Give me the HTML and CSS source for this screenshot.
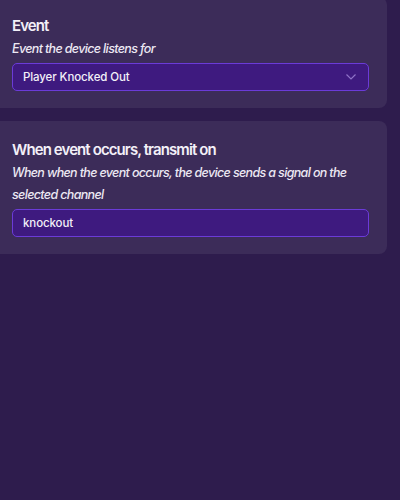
FILE: index.html
```html
<!DOCTYPE html>
<html>
<head>
<meta charset="utf-8">
<link rel="stylesheet" href="styles.css">
</head>
<body>
<div class="stack">
  <section class="card first">
    <h2 class="title">Event</h2>
    <p class="desc">Event the device listens for</p>
    <div class="field select">
      <span>Player Knocked Out</span>
      <svg class="chev" width="10" height="6" viewBox="0 0 10 6"><path d="M0.5 0.5 L5 5 L9.5 0.5" fill="none" stroke="#8f72c8" stroke-width="1.2"/></svg>
    </div>
  </section>
  <section class="card">
    <h2 class="title">When event occurs, transmit on</h2>
    <p class="desc">When when the event occurs, the device sends a signal on the selected channel</p>
    <div class="field">
      <span>knockout</span>
    </div>
  </section>
</div>
</body>
</html>
```
FILE: styles.css
```css
html, body {
  margin: 0;
  padding: 0;
  background: #2e1c4d;
  height: 100%;
}
body {
  font-family: Inter, "Noto Sans", sans-serif;
  color: #f1eef6;
}
.stack {
  display: flex;
  flex-direction: column;
  gap: 13px;
  margin-left: -10px;
  width: 397px;
}
.card {
  background: #3c2c59;
  border-radius: 8px;
  padding: 17px 18px 17px 22px;
}
.card.first {
  margin-top: -3px;
}
.title {
  margin: 0;
  font-size: 15px;
  line-height: 24px;
  font-weight: 600;
  letter-spacing: -0.9px;
  color: #f3f0f8;
}
.desc {
  margin: 0 0 3px;
  font-size: 12.5px;
  line-height: 22px;
  font-style: italic;
  font-weight: 500;
  letter-spacing: -0.65px;
  color: #ece8f3;
}
.field {
  height: 28px;
  box-sizing: border-box;
  border: 1px solid #6b3bd8;
  background: #3e1a7f;
  border-radius: 5px;
  display: flex;
  align-items: center;
  justify-content: space-between;
  padding: 0 12px 0 10px;
  font-size: 11.5px;
  font-weight: 500;
  letter-spacing: -0.1px;
  color: #f3f0f8;
}
```
